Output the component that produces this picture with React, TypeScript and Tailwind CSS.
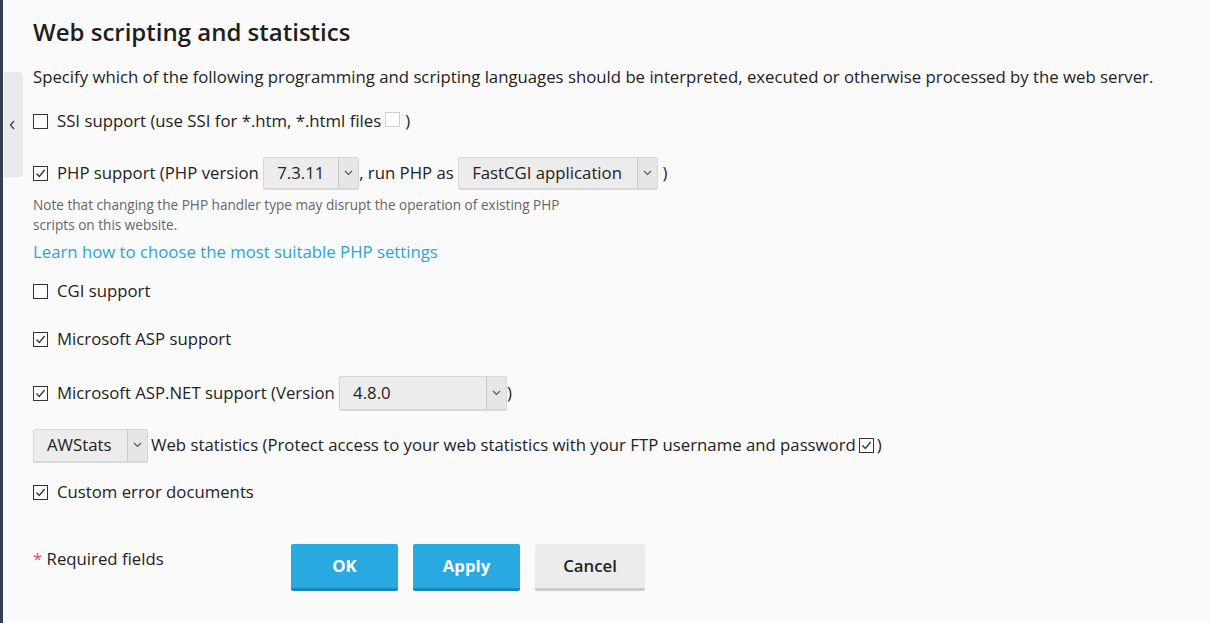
import React from 'react';

const font = { fontFamily: '"Open Sans", "Noto Sans", sans-serif' };

function Box({ checked, faint }: { checked?: boolean; faint?: boolean }) {
  return (
    <span
      className={`inline-flex items-center justify-center w-[15px] h-[15px] shrink-0 border ${
        faint ? 'border-[#cfcfcf] bg-white' : 'border-[#333] bg-white'
      }`}
    >
      {checked && (
        <svg width="11" height="11" viewBox="0 0 11 11" fill="none">
          <path d="M1.5 5.5 L4.3 8.5 L9.6 2" stroke="#333" strokeWidth="1.3" />
        </svg>
      )}
    </span>
  );
}

function Select({ value, width, height = 'h-[32px]' }: { value: string; width: string; height?: string }) {
  return (
    <span
      className={`inline-flex items-stretch ${height} ${width} bg-[#ececec] border border-[#d6d6d6] rounded-[2px] shadow-[0_1px_0_#d9d9d9]`}
    >
      <span className="flex-1 flex items-center px-[13px] text-[#222]">{value}</span>
      <span className="w-[20px] flex items-center justify-center border-l border-[#c9c9c9] bg-[#e6e6e6]">
        <svg width="9" height="6" viewBox="0 0 9 6" fill="none">
          <path d="M1 1 L4.5 4.5 L8 1" stroke="#555" strokeWidth="1.1" />
        </svg>
      </span>
    </span>
  );
}

export default function App() {
  return (
    <div className="w-[1211px] h-[623px] bg-[#fafafa] flex overflow-hidden text-[#222] text-[16.75px]" style={font}>
      <div className="w-[3px] bg-[#34404f] shrink-0" />
      <div className="w-[20px] shrink-0 pt-[72px]">
        <div className="h-[105px] w-[19px] ml-[1px] bg-[#e9e9e9] rounded-r-[4px] flex items-center justify-center">
          <svg width="7" height="10" viewBox="0 0 7 10" fill="none" className="ml-[-3px]">
            <path d="M5 1 L1.5 5 L5 9" stroke="#444" strokeWidth="1.4" />
          </svg>
        </div>
      </div>
      <div className="pl-[10px] pt-[15px] flex-1">
        <h1 className="text-[24px] font-semibold leading-[33px] text-[#1e1e1e]">Web scripting and statistics</h1>
        <p className="mt-[18px] leading-[22px]">
          Specify which of the following programming and scripting languages should be interpreted, executed or otherwise processed by the web server.
        </p>

        <label className="mt-[22px] flex items-center gap-[9px] leading-[22px]">
          <Box />
          <span className="flex items-center">
            SSI support (use SSI for *.htm, *.html files
            <span className="ml-[4px] mr-[5px]"><Box faint /></span>)
          </span>
        </label>

        <div className="mt-[25px] flex items-center gap-[9px] h-[32px]">
          <Box checked />
          <span className="flex items-center whitespace-pre">
            PHP support (PHP version{' '}
            <Select value="7.3.11" width="w-[96px]" />
            , run PHP as{' '}
            <Select value="FastCGI application" width="w-[200px]" />
            {' )'}
          </span>
        </div>
        <p className="mt-[6px] w-[562px] text-[13.6px] leading-[20px] text-[#666]">
          Note that changing the PHP handler type may disrupt the operation of existing PHP scripts on this website.
        </p>
        <a className="block mt-[6px] text-[#2aa3d9] leading-[22px]">Learn how to choose the most suitable PHP settings</a>

        <label className="mt-[17px] flex items-center gap-[9px] leading-[22px]">
          <Box />
          <span>CGI support</span>
        </label>
        <label className="mt-[26px] flex items-center gap-[9px] leading-[22px]">
          <Box checked />
          <span>Microsoft ASP support</span>
        </label>
        <div className="mt-[26px] flex items-center gap-[9px] h-[34px]">
          <Box checked />
          <span className="flex items-center whitespace-pre">
            Microsoft ASP.NET support (Version{' '}
            <Select value="4.8.0" width="w-[168px]" height="h-[34px]" />)
          </span>
        </div>
        <div className="mt-[18px] flex items-center h-[34px] whitespace-pre">
          <Select value="AWStats" width="w-[115px]" height="h-[33px]" />
          <span className="ml-[3px] flex items-center">
            Web statistics (Protect access to your web statistics with your FTP username and password
            <span className="ml-[3px] mr-[3px]"><Box checked /></span>)
          </span>
        </div>
        <label className="mt-[19px] flex items-center gap-[9px] leading-[22px]">
          <Box checked />
          <span>Custom error documents</span>
        </label>

        <div className="mt-[41px] flex items-start">
          <div className="w-[258px] pt-[4px] leading-[22px]">
            <span className="text-[#d9535f]">*</span> Required fields
          </div>
          <div className="flex gap-[15px]">
            <button className="w-[107px] h-[47px] rounded-[2px] bg-[#28a9df] border-b-[3px] border-[#1e86b7] text-white font-bold">OK</button>
            <button className="w-[107px] h-[47px] rounded-[2px] bg-[#28a9df] border-b-[3px] border-[#1e86b7] text-white font-bold">Apply</button>
            <button className="w-[110px] h-[47px] rounded-[2px] bg-[#ececec] border-b-[3px] border-[#cbcbcb] text-[#222] font-semibold">Cancel</button>
          </div>
        </div>
      </div>
    </div>
  );
}
